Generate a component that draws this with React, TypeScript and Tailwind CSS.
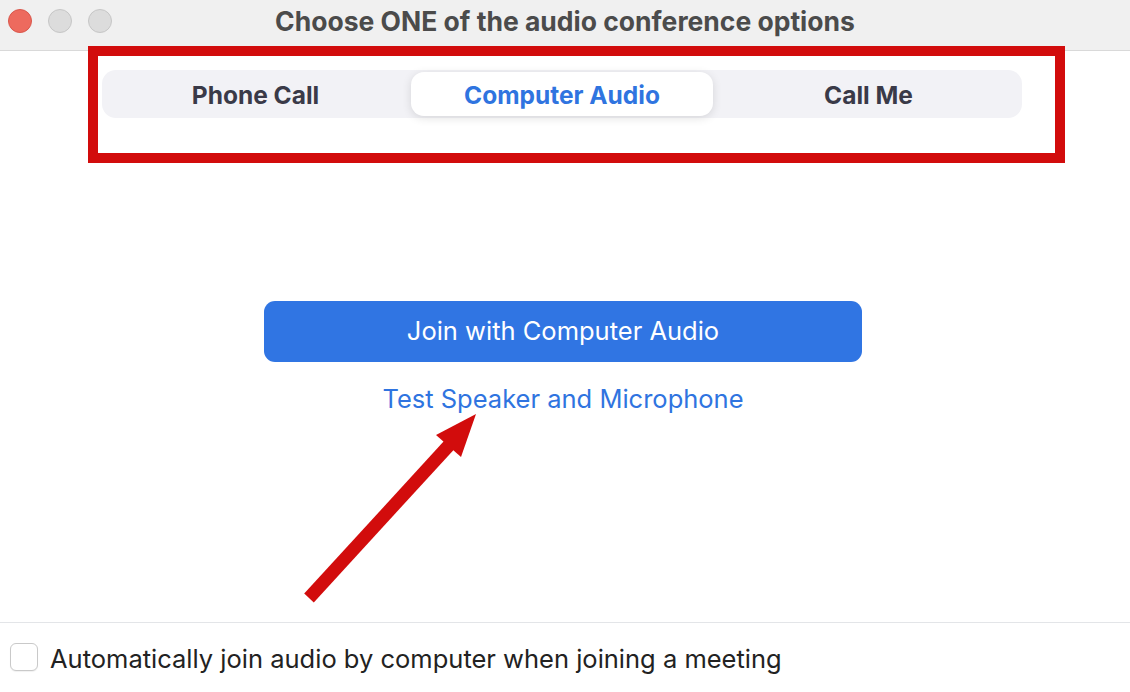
import { Fragment } from "react";

const tabs = ["Phone Call", "Computer Audio", "Call Me"];

function TrafficLights() {
  return (
    <div className="absolute left-[8px] top-[9px] flex gap-[16px]">
      <span className="w-[24px] h-[24px] rounded-full bg-[#ed6a5e] border border-[#d9574c]" />
      <span className="w-[24px] h-[24px] rounded-full bg-[#dcdcdc] border border-[#c6c6c6]" />
      <span className="w-[24px] h-[24px] rounded-full bg-[#dcdcdc] border border-[#c6c6c6]" />
    </div>
  );
}

export default function App() {
  return (
    <div
      className="relative w-[1130px] h-[692px] bg-white overflow-hidden flex flex-col"
      style={{ fontFamily: "Inter, 'Liberation Sans', sans-serif" }}
    >
      {/* title bar */}
      <div className="relative h-[51px] shrink-0 bg-[#f0f0f0] border-b border-[#d9d9d9] flex items-center justify-center">
        <TrafficLights />
        <span className="text-[26.5px] leading-[32px] font-bold text-[#4b4b4b] pb-[8px]">
          Choose ONE of the audio conference options
        </span>
      </div>

      {/* content */}
      <div className="flex-1 flex flex-col items-center pr-[4px]">
        <div className="mt-[19px] w-[920px] h-[48px] rounded-[14px] bg-[#f2f2f6] flex items-center px-[2px] -translate-x-[1px]">
          {tabs.map((t) => (
            <Fragment key={t}>
              {t === "Computer Audio" ? (
                <div className="w-[302px] h-[44px] mx-[4px] rounded-[13px] bg-white shadow-[0_2px_10px_rgba(0,0,0,0.12)] flex items-center justify-center text-[24.5px] font-bold text-[#2f74e0] pt-[2px]">
                  {t}
                </div>
              ) : (
                <div className="flex-1 h-[44px] flex items-center justify-center text-[24.5px] font-bold text-[#3a3a48] pt-[2px]">
                  {t}
                </div>
              )}
            </Fragment>
          ))}
        </div>

        <button className="mt-[183px] w-[598px] h-[61px] rounded-[11px] bg-[#3075e3] text-white text-[25.5px] flex items-center justify-center">
          Join with Computer Audio
        </button>
        <a className="mt-[21px] text-[25.5px] text-[#2f74e0] leading-[32px]">Test Speaker and Microphone</a>
      </div>

      {/* footer */}
      <div className="h-[70px] shrink-0 border-t border-[#e3e5e8] flex items-center gap-[12px] pl-[10px] pb-[2px]">
        <span className="w-[28px] h-[28px] rounded-[6px] border border-[#c9c9c9] bg-white shadow-[0_1px_1px_rgba(0,0,0,0.06)]" />
        <span className="text-[25.5px] leading-[32px] text-[#222222] pt-[4px]">
          Automatically join audio by computer when joining a meeting
        </span>
      </div>

      {/* annotation: red box */}
      <div className="absolute left-[88px] top-[46px] w-[977px] h-[117px] border-[10px] border-[#d20c0c] pointer-events-none" />

      {/* annotation: arrow */}
      <svg className="absolute left-0 top-0 pointer-events-none" width="1130" height="692">
        <line x1="309" y1="598" x2="452" y2="442" stroke="#d20c0c" strokeWidth="13" />
        <polygon points="476,414 461,457 436,435" fill="#d20c0c" />
      </svg>
    </div>
  );
}
